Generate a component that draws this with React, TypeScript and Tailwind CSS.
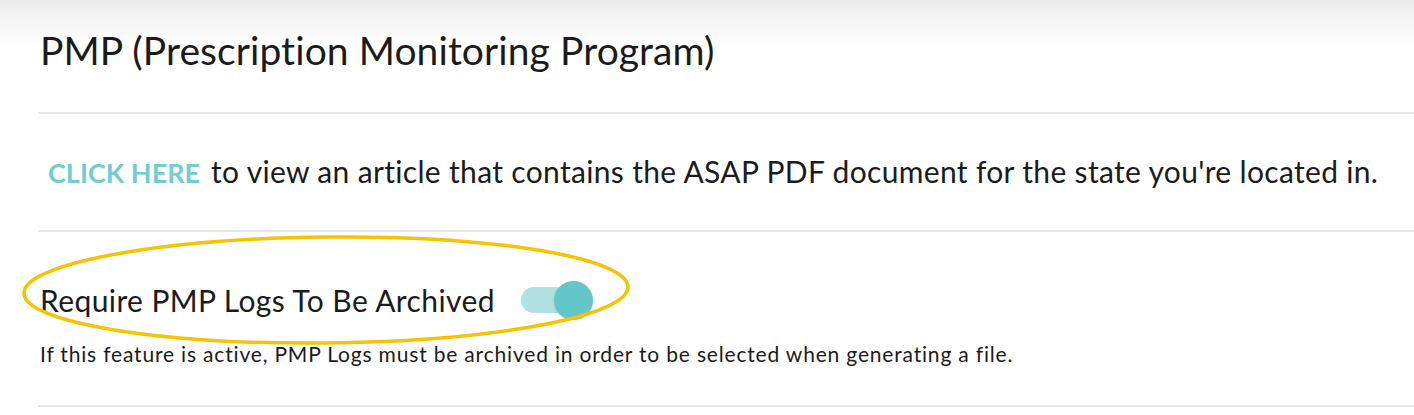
export default function App() {
  return (
    <div className="relative w-[1414px] h-[415px] overflow-hidden bg-white font-['Lato',sans-serif] text-[#1b1b1b]">
      {/* top shade */}
      <div className="h-[46px] bg-gradient-to-b from-[#ececec] to-white absolute inset-x-0 top-0" />

      <div className="relative pl-[38px]">
        {/* title */}
        <div className="h-[114px] border-b-2 border-[#e6e6e6] pt-[31px]">
          <h1 className="text-[39px] leading-[39px] pl-[2px] tracking-[0.08px]">PMP (Prescription Monitoring Program)</h1>
        </div>

        {/* link row */}
        <div className="h-[118px] border-b-2 border-[#e6e6e6] pt-[39px]">
          <p className="text-[30px] leading-[36px] pl-[10px] tracking-[0.33px]">
            <a className="text-[27px] font-bold text-[#72cdd1] mr-[11px] tracking-normal">CLICK HERE</a>
            to view an article that contains the ASAP PDF document for the state you're located in.
          </p>
        </div>

        {/* setting */}
        <div className="h-[175px] border-b-2 border-[#e6e6e6] pt-[48px] pl-[2px]">
          <div className="flex items-center gap-[26px]">
            <span className="text-[30px] leading-[36px] tracking-[0.4px]">Require PMP Logs To Be Archived</span>
            <button className="relative w-[72px] h-[40px] flex items-center">
              <span className="absolute left-0 w-[64px] h-[26px] rounded-full bg-[#b1e1e3]" />
              <span className="absolute right-0 w-[39px] h-[39px] rounded-full bg-[#63c6c8] shadow-[0_1px_3px_rgba(0,0,0,0.12)]" />
            </button>
          </div>
          <p className="text-[21px] leading-[26px] mt-[21px] tracking-[0.82px]">
            If this feature is active, PMP Logs must be archived in order to be selected when generating a file.
          </p>
        </div>
      </div>

      {/* annotation */}
      <svg className="absolute left-0 top-0 pointer-events-none" width="1414" height="415">
        <ellipse cx="326" cy="290" rx="302" ry="53" fill="none" stroke="#f7c300" strokeWidth="3.5" transform="rotate(-0.6 326 290)" />
      </svg>
    </div>
  );
}
